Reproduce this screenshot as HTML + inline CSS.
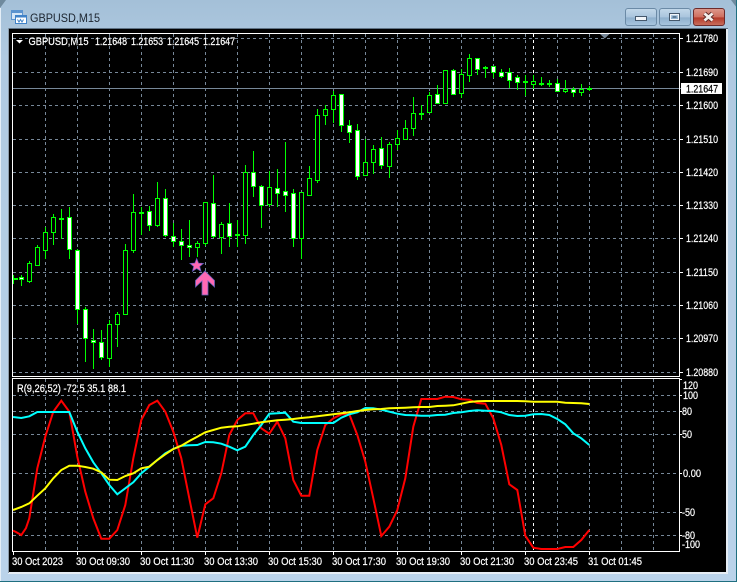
<!DOCTYPE html>
<html>
<head>
<meta charset="utf-8">
<title>GBPUSD,M15</title>
<style>
html,body{margin:0;padding:0;width:737px;height:582px;overflow:hidden;background:#b9d1e8}
svg{display:block}
text{font-family:"Liberation Sans",sans-serif;font-size:11px;fill:#fff;stroke:#fff;stroke-width:.22}
</style>
</head>
<body>
<svg xmlns="http://www.w3.org/2000/svg" width="737" height="582" viewBox="0 0 737 582">
<defs>
<linearGradient id="bg" x1="0" y1="0" x2="0" y2="1"><stop offset="0" stop-color="#a4c0d8"/><stop offset=".1" stop-color="#b0cae1"/><stop offset="1" stop-color="#bad3ea"/></linearGradient>
<linearGradient id="btn" x1="0" y1="0" x2="0" y2="1"><stop offset="0" stop-color="#c3d8ea"/><stop offset=".5" stop-color="#a9c5dd"/><stop offset=".55" stop-color="#8fb0cd"/><stop offset="1" stop-color="#a9c6df"/></linearGradient>
<linearGradient id="cls" x1="0" y1="0" x2="0" y2="1"><stop offset="0" stop-color="#dd9a8e"/><stop offset=".5" stop-color="#cf6f5f"/><stop offset=".55" stop-color="#b43a2a"/><stop offset="1" stop-color="#c9705f"/></linearGradient>
</defs>

<rect width="737" height="582" fill="url(#bg)"/>
<path d="M0 0h6L0 8z" fill="#6f8a9e"/>
<path d="M731 0h6v8z" fill="#6f8a9e"/>
<rect x="0" y="581" width="737" height="1" fill="#1f6f80"/>
<rect x="736" y="0" width="1" height="582" fill="#1f6f80"/>
<rect x="0" y="8" width="1" height="573" fill="#e4eef7"/>

<!-- title icon -->
<rect x="11.5" y="10.5" width="11" height="9" fill="#d6e6f6" stroke="#5b93cf"/>
<rect x="11.5" y="10.5" width="11" height="2.5" fill="#5b93cf"/>
<rect x="15.5" y="15.5" width="11" height="8" fill="#fff" stroke="#3f82c8"/>
<rect x="15.5" y="15.5" width="11" height="2" fill="#3f82c8"/>
<path d="M17.5 19.5l1.5 2.5 1.5-2.5 1.5 2.5 1.5-2.5" fill="none" stroke="#3f82c8"/>
<text x="30" y="22" textLength="70" lengthAdjust="spacingAndGlyphs" style="font-size:12px;fill:#1c2530;stroke:none">GBPUSD,M15</text>

<!-- window buttons -->
<rect x="625.5" y="8.5" width="31" height="17" rx="2.5" fill="url(#btn)" stroke="#6b8aa6"/>
<rect x="659.5" y="8.5" width="31" height="17" rx="2.5" fill="url(#btn)" stroke="#6b8aa6"/>
<rect x="693.5" y="8.5" width="31" height="17" rx="2.5" fill="url(#cls)" stroke="#6d2b2b"/>
<rect x="635.5" y="16.5" width="11" height="4" fill="#f1f5f9" stroke="#45586c"/>
<rect x="669.5" y="13.5" width="10" height="7" fill="none" stroke="#45586c"/>
<rect x="670.5" y="14.5" width="8" height="5" fill="none" stroke="#f1f5f9"/>
<rect x="672.5" y="16" width="4" height="2" fill="#5c7a96"/>
<path d="M704.5 13.5l8 7M712.5 13.5l-8 7" stroke="#5a2a28" stroke-width="4.6" fill="none"/>
<path d="M704.5 13.5l8 7M712.5 13.5l-8 7" stroke="#f3f0ee" stroke-width="2.8" fill="none"/>

<!-- client area -->
<rect x="8" y="28" width="720" height="546" fill="#e6edf4"/>
<rect x="8" y="28" width="720" height="1" fill="#5e7285"/>
<rect x="8" y="28" width="1" height="545" fill="#8b9aa8"/>
<rect x="9" y="29" width="717" height="543" fill="#000"/>

<!-- grid -->
<g stroke="#778899" stroke-width="1" stroke-dasharray="3 3" fill="none" shape-rendering="crispEdges">
<path d="M13 38.5H679M13 72.5H679M13 105.5H679M13 139.5H679M13 172.5H679M13 205.5H679M13 238.5H679M13 272.5H679M13 305.5H679M13 338.5H679M13 372.5H679"/>
<path d="M45.5 34V376M77.5 34V376M109.5 34V376M141.5 34V376M173.5 34V376M205.5 34V376M237.5 34V376M269.5 34V376M301.5 34V376M333.5 34V376M365.5 34V376M397.5 34V376M429.5 34V376M461.5 34V376M493.5 34V376M525.5 34V376M557.5 34V376M589.5 34V376M621.5 34V376M653.5 34V376"/>
<path d="M13 395.5H679M13 411.5H679M13 434.5H679M13 473.5H679M13 512.5H679M13 535.5H679"/>
<path d="M45.5 379V551M77.5 379V551M109.5 379V551M141.5 379V551M173.5 379V551M205.5 379V551M237.5 379V551M269.5 379V551M301.5 379V551M333.5 379V551M365.5 379V551M397.5 379V551M429.5 379V551M461.5 379V551M493.5 379V551M525.5 379V551M557.5 379V551M589.5 379V551M621.5 379V551M653.5 379V551"/>
</g>
<path d="M533.5 34V376M533.5 379V551" stroke="#fff" stroke-dasharray="3 3" shape-rendering="crispEdges" fill="none"/>
<path d="M13 88.5H681" stroke="#778899" shape-rendering="crispEdges"/>

<!-- candles -->
<g shape-rendering="crispEdges">
<path stroke="#00ff00" fill="none" d="M13.5 275V284M21.5 275V286M29.5 261V283M37.5 245V266M45.5 227V259M53.5 214V245M61.5 209V239M69.5 207V259M77.5 249V324M85.5 307V362M93.5 329V369M101.5 330V360M109.5 320V367M117.5 312V347M125.5 244V315M133.5 194V253M141.5 207V235M149.5 206V231M157.5 182V227M165.5 189V237M173.5 223V247M181.5 229V260M189.5 220V257M197.5 241V257M205.5 202V246M213.5 175V238M221.5 222V254M229.5 203V247M237.5 220V247M245.5 165V244M253.5 151V197M261.5 185V228M269.5 171V207M277.5 169V207M285.5 142V212M293.5 189V247M301.5 192V259M309.5 166V196M317.5 109V183M325.5 105V125M333.5 91V123M341.5 94V132M349.5 120V143M357.5 124V180M365.5 139V176M373.5 145V174M381.5 137V169M389.5 142V178M397.5 130V150M405.5 120V140M413.5 97V136M421.5 105V120M429.5 92V113M437.5 85V104M445.5 70V104M453.5 69V95M461.5 69V98M469.5 54V82M477.5 58V75M485.5 66V78M493.5 66V78M501.5 69V78M509.5 68V88M517.5 75V90M525.5 75V96M533.5 75V89M541.5 77V86M549.5 80V87M557.5 79V92M565.5 80V93M573.5 87V97M581.5 84V96M589.5 86V91"/>
<path fill="#00ff00" d="M13 278h5v2h-5zM59 218h5v2h-5zM139 212h5v2h-5zM235 234h5v2h-5zM419 113h5v2h-5zM483 67h5v2h-5zM523 81h5v2h-5zM539 83h5v2h-5zM547 83h5v2h-5zM587 88h5v2h-5z"/>
<!-- hollow -->
<path fill="#000" stroke="#00ff00" d="M27.5 263.5h4V281.5h-4zM35.5 247.5h4V265.5h-4zM43.5 232.5h4V250.5h-4zM51.5 217.5h4V232.5h-4zM107.5 324.5h4V358.5h-4zM115.5 314.5h4V324.5h-4zM123.5 250.5h4V314.5h-4zM131.5 212.5h4V250.5h-4zM155.5 198.5h4V225.5h-4zM195.5 243.5h4V247.5h-4zM203.5 202.5h4V243.5h-4zM219.5 224.5h4V237.5h-4zM243.5 172.5h4V235.5h-4zM267.5 187.5h4V204.5h-4zM299.5 192.5h4V238.5h-4zM307.5 178.5h4V195.5h-4zM315.5 115.5h4V180.5h-4zM323.5 109.5h4V115.5h-4zM331.5 95.5h4V109.5h-4zM363.5 162.5h4V175.5h-4zM371.5 149.5h4V162.5h-4zM387.5 144.5h4V166.5h-4zM395.5 138.5h4V144.5h-4zM403.5 128.5h4V139.5h-4zM411.5 113.5h4V128.5h-4zM427.5 95.5h4V112.5h-4zM443.5 70.5h4V103.5h-4zM459.5 74.5h4V93.5h-4zM467.5 58.5h4V75.5h-4zM531.5 81.5h4V84.5h-4zM563.5 89.5h4V91.5h-4zM579.5 89.5h4V92.5h-4z"/>
<!-- filled -->
<path fill="#fff" stroke="#00ff00" d="M19.5 277.5h4V279.5h-4zM67.5 217.5h4V249.5h-4zM75.5 250.5h4V309.5h-4zM83.5 309.5h4V338.5h-4zM91.5 340.5h4V342.5h-4zM99.5 342.5h4V357.5h-4zM147.5 211.5h4V225.5h-4zM163.5 198.5h4V235.5h-4zM171.5 236.5h4V241.5h-4zM179.5 241.5h4V245.5h-4zM187.5 245.5h4V247.5h-4zM211.5 203.5h4V236.5h-4zM227.5 223.5h4V236.5h-4zM251.5 172.5h4V186.5h-4zM259.5 186.5h4V205.5h-4zM275.5 188.5h4V193.5h-4zM283.5 191.5h4V195.5h-4zM291.5 193.5h4V238.5h-4zM339.5 94.5h4V125.5h-4zM347.5 125.5h4V132.5h-4zM355.5 130.5h4V176.5h-4zM379.5 148.5h4V165.5h-4zM435.5 94.5h4V103.5h-4zM451.5 70.5h4V94.5h-4zM475.5 58.5h4V69.5h-4zM491.5 66.5h4V72.5h-4zM499.5 72.5h4V76.5h-4zM507.5 72.5h4V80.5h-4zM515.5 77.5h4V82.5h-4zM555.5 83.5h4V91.5h-4zM571.5 89.5h4V92.5h-4z"/>
</g>

<!-- frames -->
<g fill="#fff" shape-rendering="crispEdges">
<rect x="12" y="33" width="668" height="1"/>
<rect x="12" y="33" width="1" height="344"/>
<rect x="679" y="33" width="1" height="344"/>
<rect x="12" y="376" width="668" height="1"/>
<rect x="12" y="378" width="668" height="1"/>
<rect x="12" y="378" width="1" height="174"/>
<rect x="679" y="378" width="1" height="174"/>
<rect x="12" y="551" width="668" height="1"/>
<path d="M680 38h3v1h-3zM680 72h3v1h-3zM680 105h3v1h-3zM680 139h3v1h-3zM680 172h3v1h-3zM680 205h3v1h-3zM680 238h3v1h-3zM680 272h3v1h-3zM680 305h3v1h-3zM680 338h3v1h-3zM680 372h3v1h-3zM680 379h2v1h-2zM680 395h2v1h-2zM680 411h2v1h-2zM680 434h2v1h-2zM680 473h2v1h-2zM680 512h2v1h-2zM680 535h2v1h-2z"/>
<path d="M13 552h1v3h-1zM77 552h1v3h-1zM141 552h1v3h-1zM205 552h1v3h-1zM269 552h1v3h-1zM333 552h1v3h-1zM397 552h1v3h-1zM461 552h1v3h-1zM525 552h1v3h-1zM589 552h1v3h-1z"/>
</g>
<path d="M600 34h9.500l-4.750 4.500z" fill="#778899"/>

<!-- markers -->
<path d="M196.700 258.500l1.900 4.600 4.900.3-3.800 3.100 1.300 4.800-4.300-2.700-4.300 2.700 1.300-4.800-3.800-3.100 4.900-.3z" fill="#ff69b4" stroke="#5a5ac0" stroke-width=".7"/>
<path d="M205 271L214.500 280.500V287L208 281V295H202V281L195.500 287V280.500Z" fill="#ff69b4" stroke="#6060b8" stroke-width=".8"/>

<!-- oscillator lines -->
<g fill="none" stroke-width="2">
<g stroke="#ff0000">
<polyline points="13,530.700 16,532 21.300,535 26,528 29.300,518.300 37.300,468.300 45.300,436.700 53.300,411.700 61.300,400.700 69.300,411.700 77.300,456.700 85.300,491.700 93.300,518.300 101.300,538.700 109.300,538.700 117.300,530 125.300,505 133.300,458.300 141.300,420 149.300,405 157.300,400.700 165.300,411.700 173.300,431.700 181.300,458.300 189.300,498.300 197.300,537.700 205.300,504.300 213.300,498.300 221.300,473.300 229.300,435 237.300,420 245.300,413.300 253.300,413.300 261.300,428.300 269.300,433.700 277.300,421.700 285.300,438.300 293.300,480 301.300,495.700 309.300,495.700 317.300,450 325.300,425 333.300,418.300 341.300,414.300 349.300,414.300 357.300,435 365.300,461.700 373.300,498.300 381.300,536 389.300,526.700 397.300,510 405.300,478.300 413.300,426.700 421.300,399 429.300,399 437.300,399 445.300,396.700 453.300,397 461.300,399.300 469.300,399.700 477.300,403 485.300,403.700 493.300,418.300 501.300,445 509.300,484.300 517.300,490 525.300,535.700 533.300,547.700 541.300,549 549.300,549 557.300,549 565.300,547 573.300,547 581.300,540 589.300,530"/>
</g>
<g stroke="#00ffff">
<polyline points="13,417 21.300,418 29.300,416.300 37.300,412 45.300,412 53.300,412 61.300,412 69.300,412 77.300,431.700 85.300,448.300 93.300,462.300 101.300,473.300 109.300,485 117.300,494.300 125.300,488.300 133.300,482.300 141.300,473.300 149.300,466.700 157.300,460 165.300,453.300 173.300,449 181.300,445.700 189.300,445.300 197.300,445 205.300,442 213.300,442.300 221.300,443.700 229.300,446.700 237.300,450.300 245.300,446.700 253.300,435 261.300,425 269.300,413.700 277.300,413.300 285.300,412.700 293.300,421.700 301.300,423 309.300,423 317.300,423 325.300,423 333.300,423 341.300,417.700 349.300,414.300 357.300,412.300 365.300,408 373.300,408.300 381.300,409.700 389.300,411.700 397.300,413.700 405.300,415 413.300,415.300 421.300,415.700 429.300,415.700 437.300,415 445.300,414.700 453.300,413 461.300,412.300 469.300,411 477.300,410.300 485.300,410.700 493.300,411 501.300,412.300 509.300,415 517.300,416 525.300,415.700 533.300,414.300 541.300,414 549.300,415 557.300,419 565.300,424.300 573.300,433.300 581.300,438.300 589.300,445"/>
</g>
<g stroke="#ffff00">
<polyline points="13,510 21.300,507 29.300,503.300 37.300,495.700 45.300,488.300 53.300,478.300 61.300,470 69.300,465.700 77.300,465.700 85.300,467 93.300,468.700 101.300,472.300 109.300,479.700 117.300,480 125.300,476 133.300,473.300 141.300,468.300 149.300,466.700 157.300,460 165.300,454.300 173.300,449 181.300,445.700 189.300,441 197.300,436.700 205.300,432.300 213.300,430 221.300,427.700 229.300,426.700 237.300,426.300 245.300,425 253.300,423.700 261.300,422.300 269.300,421.300 277.300,420.300 285.300,419.700 293.300,419 301.300,418 309.300,417.300 317.300,416.300 325.300,415.300 333.300,414.300 341.300,413.300 349.300,412.300 357.300,411 365.300,410 373.300,409.300 381.300,409 389.300,408.300 397.300,408 405.300,407.700 413.300,407.300 421.300,407 429.300,407 437.300,406 445.300,405.700 453.300,405.300 461.300,403.700 469.300,402 477.300,401.300 485.300,401 493.300,401 501.300,401 509.300,401 517.300,401 525.300,401.300 533.300,401.700 541.300,401.700 549.300,401.700 557.300,401.700 565.300,402.700 573.300,403 581.300,403.300 589.300,404"/>
</g>
</g>

<!-- chart text -->
<path d="M16 40h7l-3.500 3.500z" fill="#fff"/>
<text x="28.500" y="45" textLength="60" lengthAdjust="spacingAndGlyphs">GBPUSD,M15</text>
<text x="95" y="45" textLength="32" lengthAdjust="spacingAndGlyphs">1.21648</text>
<text x="131" y="45" textLength="32" lengthAdjust="spacingAndGlyphs">1.21653</text>
<text x="167" y="45" textLength="32" lengthAdjust="spacingAndGlyphs">1.21645</text>
<text x="203" y="45" textLength="32" lengthAdjust="spacingAndGlyphs">1.21647</text>
<text x="17" y="392" textLength="109" lengthAdjust="spacingAndGlyphs">R(9,26,52) -72.5 35.1 88.1</text>

<!-- price axis -->
<g>
<text x="686" y="42" textLength="32" lengthAdjust="spacingAndGlyphs">1.21780</text>
<text x="686" y="76" textLength="32" lengthAdjust="spacingAndGlyphs">1.21690</text>
<text x="686" y="109" textLength="32" lengthAdjust="spacingAndGlyphs">1.21600</text>
<text x="686" y="143" textLength="32" lengthAdjust="spacingAndGlyphs">1.21510</text>
<text x="686" y="176" textLength="32" lengthAdjust="spacingAndGlyphs">1.21420</text>
<text x="686" y="209" textLength="32" lengthAdjust="spacingAndGlyphs">1.21330</text>
<text x="686" y="242" textLength="32" lengthAdjust="spacingAndGlyphs">1.21240</text>
<text x="686" y="276" textLength="32" lengthAdjust="spacingAndGlyphs">1.21150</text>
<text x="686" y="309" textLength="32" lengthAdjust="spacingAndGlyphs">1.21060</text>
<text x="686" y="342" textLength="32" lengthAdjust="spacingAndGlyphs">1.20970</text>
<text x="686" y="376" textLength="32" lengthAdjust="spacingAndGlyphs">1.20880</text>
</g>
<rect x="681" y="83" width="41" height="11" fill="#fff"/>
<text x="686" y="92.500" textLength="32" lengthAdjust="spacingAndGlyphs" style="fill:#000;stroke:#000">1.21647</text>

<!-- oscillator axis -->
<g>
<text x="683" y="389" textLength="15" lengthAdjust="spacingAndGlyphs">120</text>
<text x="683" y="399" textLength="15" lengthAdjust="spacingAndGlyphs">100</text>
<text x="682" y="415" textLength="10" lengthAdjust="spacingAndGlyphs">80</text>
<text x="682" y="438" textLength="10" lengthAdjust="spacingAndGlyphs">50</text>
<text x="683" y="477" textLength="18" lengthAdjust="spacingAndGlyphs">0.00</text>
<text x="682" y="516" textLength="13" lengthAdjust="spacingAndGlyphs">-50</text>
<text x="682" y="539" textLength="13" lengthAdjust="spacingAndGlyphs">-80</text>
<text x="682" y="548" textLength="18" lengthAdjust="spacingAndGlyphs">-100</text>
</g>

<!-- time axis -->
<g>
<text x="12" y="565" textLength="51" lengthAdjust="spacingAndGlyphs">30 Oct 2023</text>
<text x="76" y="565" textLength="54" lengthAdjust="spacingAndGlyphs">30 Oct 09:30</text>
<text x="140" y="565" textLength="54" lengthAdjust="spacingAndGlyphs">30 Oct 11:30</text>
<text x="204" y="565" textLength="54" lengthAdjust="spacingAndGlyphs">30 Oct 13:30</text>
<text x="268" y="565" textLength="54" lengthAdjust="spacingAndGlyphs">30 Oct 15:30</text>
<text x="332" y="565" textLength="54" lengthAdjust="spacingAndGlyphs">30 Oct 17:30</text>
<text x="396" y="565" textLength="54" lengthAdjust="spacingAndGlyphs">30 Oct 19:30</text>
<text x="460" y="565" textLength="54" lengthAdjust="spacingAndGlyphs">30 Oct 21:30</text>
<text x="524" y="565" textLength="54" lengthAdjust="spacingAndGlyphs">30 Oct 23:45</text>
<text x="588" y="565" textLength="54" lengthAdjust="spacingAndGlyphs">31 Oct 01:45</text>
</g>
</svg>
</body>
</html>
